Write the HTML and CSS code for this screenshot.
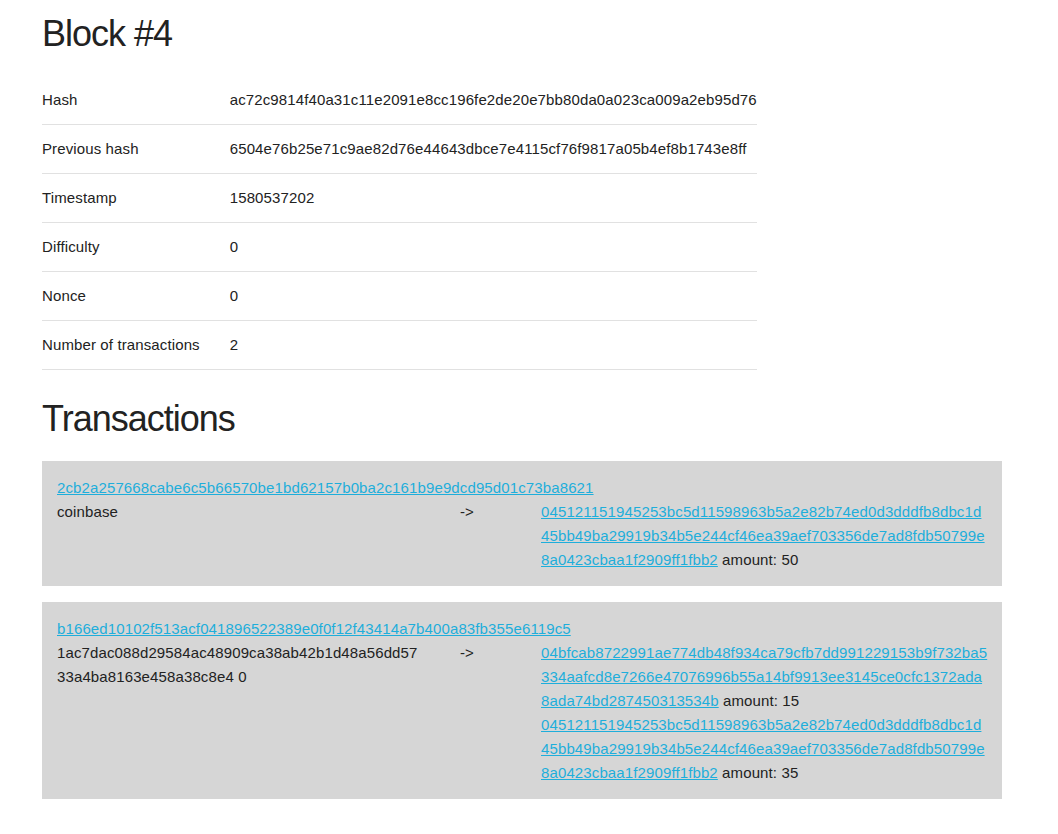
FILE: index.html
```html
<!DOCTYPE html>
<html>
<head>
<meta charset="utf-8">
<title>Block #4</title>
<link rel="stylesheet" href="styles.css">
</head>
<body>
<div class="container">
  <h2 class="title">Block #4</h2>
  <table class="info">
    <tbody>
      <tr><td>Hash</td><td>ac72c9814f40a31c11e2091e8cc196fe2de20e7bb80da0a023ca009a2eb95d76</td></tr>
      <tr><td>Previous hash</td><td>6504e76b25e71c9ae82d76e44643dbce7e4115cf76f9817a05b4ef8b1743e8ff</td></tr>
      <tr><td>Timestamp</td><td>1580537202</td></tr>
      <tr><td>Difficulty</td><td>0</td></tr>
      <tr><td>Nonce</td><td>0</td></tr>
      <tr><td>Number of transactions</td><td>2</td></tr>
    </tbody>
  </table>
  <h2 class="title title-tx">Transactions</h2>
  <div class="tx">
    <a href="#" class="hash">2cb2a257668cabe6c5b66570be1bd62157b0ba2c161b9e9dcd95d01c73ba8621</a>
    <div class="tx-row">
      <div class="tx-in">coinbase</div>
      <div class="tx-arrow">-&gt;</div>
      <div class="tx-out">
        <div><a href="#" class="hash">045121151945253bc5d11598963b5a2e82b74ed0d3dddfb8dbc1d45bb49ba29919b34b5e244cf46ea39aef703356de7ad8fdb50799e8a0423cbaa1f2909ff1fbb2</a> amount: 50</div>
      </div>
    </div>
  </div>
  <div class="tx">
    <a href="#" class="hash">b166ed10102f513acf041896522389e0f0f12f43414a7b400a83fb355e6119c5</a>
    <div class="tx-row">
      <div class="tx-in">1ac7dac088d29584ac48909ca38ab42b1d48a56dd5733a4ba8163e458a38c8e4 0</div>
      <div class="tx-arrow">-&gt;</div>
      <div class="tx-out">
        <div><a href="#" class="hash">04bfcab8722991ae774db48f934ca79cfb7dd991229153b9f732ba5334aafcd8e7266e47076996b55a14bf9913ee3145ce0cfc1372ada8ada74bd287450313534b</a> amount: 15</div>
        <div><a href="#" class="hash">045121151945253bc5d11598963b5a2e82b74ed0d3dddfb8dbc1d45bb49ba29919b34b5e244cf46ea39aef703356de7ad8fdb50799e8a0423cbaa1f2909ff1fbb2</a> amount: 35</div>
      </div>
    </div>
  </div>
</div>
</body>
</html>
```

FILE: styles.css
```css
html, body {
  margin: 0;
  padding: 0;
  background: #fff;
}
body {
  font-family: "Liberation Sans", Arial, Helvetica, sans-serif;
  font-size: 15px;
  line-height: 24px;
  letter-spacing: 0.12px;
  color: #222;
}
.container {
  width: 960px;
  margin-left: 42px;
  padding-top: 11px;
  padding-bottom: 30px;
}
.title {
  font-size: 36px;
  line-height: 45px;
  font-weight: normal;
  letter-spacing: -1px;
  margin: 0 0 20px 0;
}
.title-tx {
  margin-top: 0;
}
.info {
  border-collapse: collapse;
  border-spacing: 0;
  margin-bottom: 26px;
}
.info td {
  padding: 12px 15px;
  border-bottom: 1px solid #e1e1e1;
  text-align: left;
  vertical-align: top;
}
.info td:first-child {
  padding-left: 0;
}
.info td:last-child {
  padding-right: 0;
}
.tx {
  background: #d6d6d6;
  padding: 15px 13px 14px 15px;
  margin-bottom: 16px;
}
a.hash {
  color: #1eaedb;
  text-decoration: underline;
  word-break: break-all;
}
.tx-row {
  display: grid;
  grid-template-columns: 365px 43px 447.5px;
  column-gap: 38px;
}
.tx-in, .tx-out {
  word-break: break-all;
}
```
